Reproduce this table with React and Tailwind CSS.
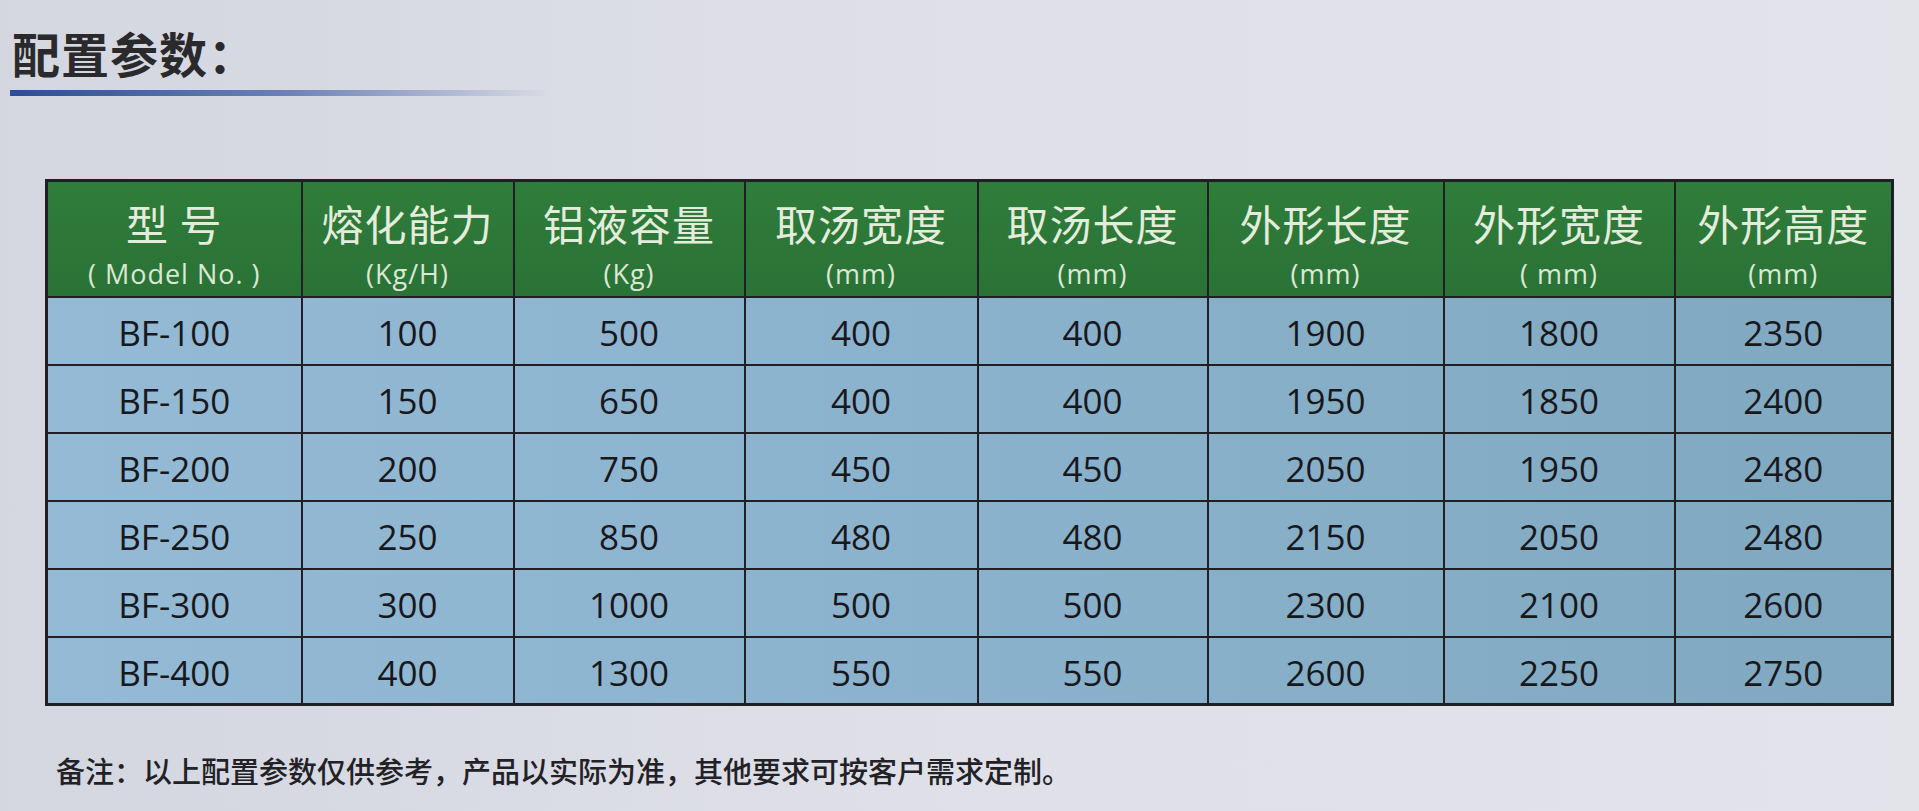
import React from "react";

const columns = [
  { title: "型 号", unit: "( Model No. )", width: "w-[255px]" },
  { title: "熔化能力", unit: "(Kg/H)", width: "w-[212px]" },
  { title: "铝液容量", unit: "(Kg)", width: "w-[231px]" },
  { title: "取汤宽度", unit: "(mm)", width: "w-[233px]" },
  { title: "取汤长度", unit: "(mm)", width: "w-[230px]" },
  { title: "外形长度", unit: "(mm)", width: "w-[236px]" },
  { title: "外形宽度", unit: "( mm)", width: "w-[231px]" },
  { title: "外形高度", unit: "(mm)", width: "w-[218px]" },
];

const rows = [
  ["BF-100", "100", "500", "400", "400", "1900", "1800", "2350"],
  ["BF-150", "150", "650", "400", "400", "1950", "1850", "2400"],
  ["BF-200", "200", "750", "450", "450", "2050", "1950", "2480"],
  ["BF-250", "250", "850", "480", "480", "2150", "2050", "2480"],
  ["BF-300", "300", "1000", "500", "500", "2300", "2100", "2600"],
  ["BF-400", "400", "1300", "550", "550", "2600", "2250", "2750"],
];

function SpecTable() {
  return (
    <table className="ml-[45px] w-[1846px] table-fixed border-collapse border-[3px] border-[#1f1f24]">
      <thead>
        <tr className="bg-gradient-to-b from-[#2f7d3b] to-[#2a7236]">
          {columns.map((c) => (
            <th
              key={c.title}
              className={`${c.width} h-[116px] border-2 border-[#1f1f24] p-0 align-top font-normal`}
            >
              <div className="flex flex-col items-center pt-[17px]">
                <span className="h-[48px] text-[42px] leading-[48px] text-[#e4ecdc] tracking-[1px]">
                  {c.title}
                </span>
                <span className="mt-[11px] h-[32px] text-[27px] leading-[32px] text-[#dce7d4] tracking-[1px] font-['Open_Sans',sans-serif] whitespace-pre">
                  {c.unit}
                </span>
              </div>
            </th>
          ))}
        </tr>
      </thead>
      <tbody>
        {rows.map((r) => (
          <tr key={r[0]} className="bg-gradient-to-r from-[#94bad6] via-[#8bb2cc] to-[#80a8c0]">
            {r.map((v, i) => (
              <td
                key={i}
                className="h-[68px] border-2 border-[#1f1f24] p-0 pt-[5px] text-center text-[35px] text-[#18181c] font-['Open_Sans',sans-serif]"
              >
                {v}
              </td>
            ))}
          </tr>
        ))}
      </tbody>
    </table>
  );
}

export default function App() {
  return (
    <div className="w-[1919px] h-[811px] overflow-hidden bg-gradient-to-r from-[#d4d6e0] via-[#dfe0e8] to-[#e3e4ea] font-['Noto_Sans_CJK_SC','Noto_Sans',sans-serif]">
      <div className="pt-[24px] pl-[12px]">
        <h1 className="text-[48px] leading-[56px] font-bold text-[#2a2a2c] tracking-[1px]">
          配置参数：
        </h1>
      </div>
      <div className="mt-[10px] ml-[10px] h-[6px] w-[540px] bg-gradient-to-r from-[#2c4c9c] via-[#6a7fb8] to-transparent" />
      <div className="mt-[83px]">
        <SpecTable />
      </div>
      <p className="mt-[46px] ml-[56px] text-[29px] leading-[36px] font-medium text-[#222226]">
        备注：以上配置参数仅供参考，产品以实际为准，其他要求可按客户需求定制。
      </p>
    </div>
  );
}
